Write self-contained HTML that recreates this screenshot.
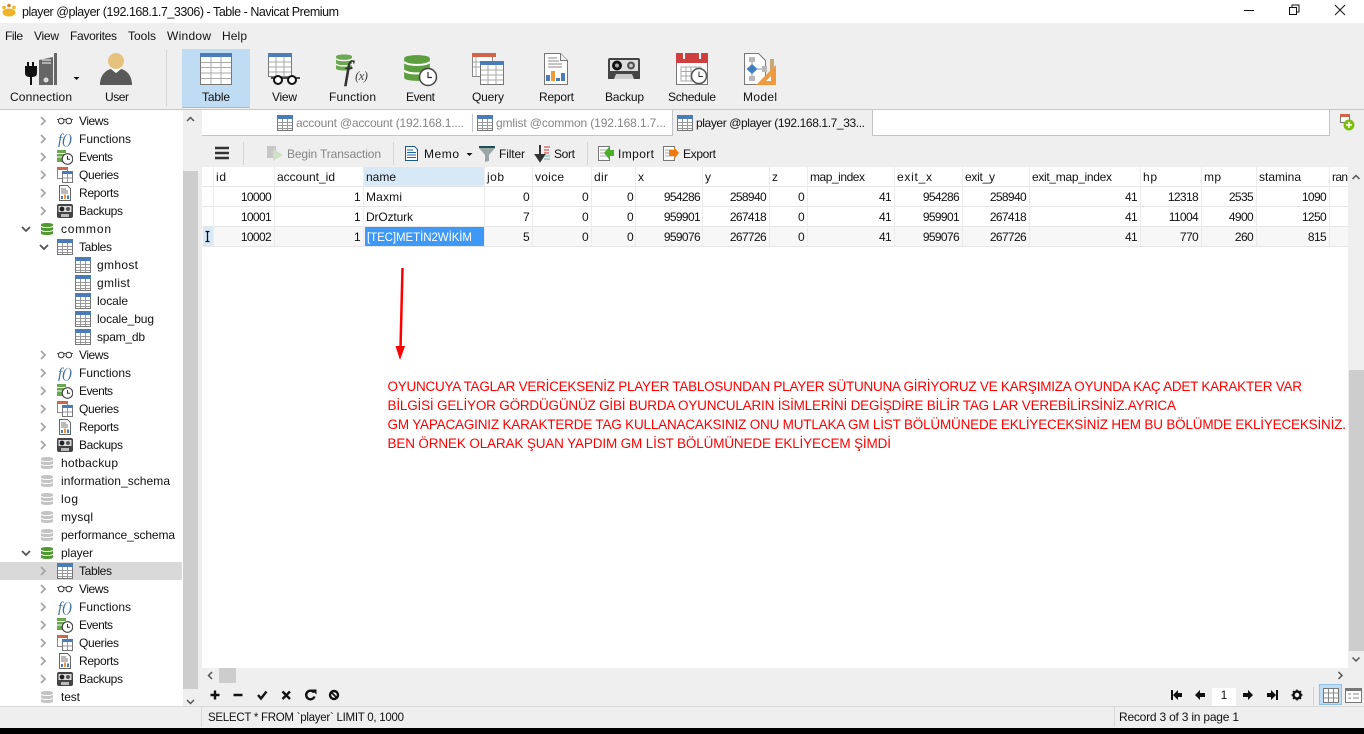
<!DOCTYPE html>
<html><head><meta charset="utf-8"><title>player @player (192.168.1.7_3306) - Table - Navicat Premium</title>
<style>
html,body{margin:0;padding:0;background:#000;width:1364px;height:734px;overflow:hidden}
svg{display:block}
text{font-family:"Liberation Sans","DejaVu Sans",sans-serif;font-size:12px;fill:#111}
.g{fill:#858585}
.r{text-anchor:end;letter-spacing:-.65px}
.m{text-anchor:middle}
.red{fill:#f00;font-size:13.5px}
.fn{font-family:"Liberation Serif",serif;font-style:italic;font-size:15px;fill:#3f6f9f}
</style></head><body>
<svg width="1364" height="734" viewBox="0 0 1364 734" xmlns="http://www.w3.org/2000/svg">
<defs>
<symbol id="tbl" viewBox="0 0 16 16"><rect x=".5" y=".5" width="15" height="15" fill="#fff" stroke="#777"/><rect width="16" height="4" fill="#4a7db8"/><path d="M5.5 4v11M10.5 4v11M1 7.5h14M1 10.5h14M1 13.5h14" stroke="#999" fill="none"/></symbol>
<symbol id="gl" viewBox="0 0 16 8"><path d="M0 2.500h16" stroke="#333" stroke-width=".8"/><circle cx="4.200" cy="4" r="2.800" fill="#fff" stroke="#333" stroke-width="1"/><circle cx="11.800" cy="4" r="2.800" fill="#fff" stroke="#333" stroke-width="1"/></symbol>
<symbol id="ev" viewBox="0 0 16 16"><path d="M0 1h9v12H0z" fill="#6aa84f"/><path d="M0 4.5h9M0 8h9" stroke="#fff"/><circle cx="10.5" cy="10" r="5.3" fill="#fff" stroke="#444" stroke-width="1.2"/><path d="M10.5 7v3.3h2.6" stroke="#333" fill="none"/></symbol>
<symbol id="qu" viewBox="0 0 16 16"><rect x=".5" y=".5" width="10" height="11" fill="#fff" stroke="#888"/><rect width="11" height="3" fill="#d0654a"/><rect x="5.5" y="4.5" width="10" height="11" fill="#fff" stroke="#777"/><rect x="5" y="4" width="11" height="3" fill="#4a7db8"/><path d="M10.5 7v8M6 11h9" stroke="#999"/></symbol>
<symbol id="rp" viewBox="0 0 16 16"><path d="M2.5.5h8l3 3v12h-11z" fill="#fff" stroke="#666"/><path d="M4 4h5M4 6h7M4 8h7" stroke="#777"/><rect x="4" y="11" width="2" height="3" fill="#4a7db8"/><rect x="7" y="9.500" width="2" height="4.500" fill="#ef9a3c"/><rect x="10" y="10.500" width="2" height="3.500" fill="#4a7db8"/></symbol>
<symbol id="bk" viewBox="0 0 16 16"><rect y="1" width="16" height="14" rx="2" fill="#444"/><rect x="1.500" y="3" width="13" height="6" fill="#ddd"/><circle cx="5" cy="6" r="2.400" fill="#222"/><circle cx="11" cy="6" r="2" fill="#555"/><rect x="4" y="11" width="8" height="3" fill="#bbb"/></symbol>
<symbol id="db" viewBox="0 0 12 14"><path d="M0 2.500C0 .5 12 .5 12 2.500V11.500C12 13.500 0 13.500 0 11.500Z" fill="currentColor"/><path d="M0 4.200C2 6 10 6 12 4.200M0 8.200C2 10 10 10 12 8.200" stroke="#fff" fill="none"/></symbol>
</defs>

<!-- base -->
<rect width="1364" height="728" fill="#efefef"/>
<rect y="728" width="1364" height="6" fill="#000"/>

<!-- title bar -->
<rect width="1364" height="23" fill="#fff"/>
<g fill="#f0b429"><ellipse cx="9" cy="12.500" rx="6.500" ry="4"/><circle cx="4" cy="7.500" r="1.800"/><circle cx="9" cy="5.500" r="1.800" fill="#d9822b"/><circle cx="14" cy="7.500" r="1.800"/></g>
<text x="22" y="16" style="font-size:12.5px" textLength="317">player @player (192.168.1.7_3306) - Table - Navicat Premium</text>
<path d="M1244 10.500h10" stroke="#111"/>
<path d="M1289.500 7.500h7v7h-7zM1292 7.500v-2.500h7v7h-2.500" fill="none" stroke="#111"/>
<path d="M1335 5l10 10M1345 5l-10 10" stroke="#111"/>

<!-- menu -->
<text x="5" y="40" textLength="18">File</text>
<text x="34" y="40" textLength="25">View</text>
<text x="70" y="40" textLength="47">Favorites</text>
<text x="128" y="40" textLength="28">Tools</text>
<text x="167" y="40" textLength="44">Window</text>
<text x="222" y="40" textLength="25">Help</text>

<!-- main toolbar -->
<rect x="182" y="49" width="68" height="59" fill="#bfdcf2"/><rect x="182" y="107" width="68" height="1" fill="#8ec3ee"/>
<path d="M166.500 50v56" stroke="#d4d4d4"/>
<path d="M39 60l14-3v28H39z" fill="#666"/><path d="M54 53h3v32h-3z" fill="#666"/><path d="M42 60h9M42 63h9" stroke="#fff"/><circle cx="46" cy="80" r="2.500" fill="#ddd"/>
<path d="M25 66h2v-4h2v4h3v-4h2v4h3v7q0 4-5 4v8h-2v-8q-5 0-5-4z" fill="#111"/>
<path d="M73.500 77h6l-3 3z" fill="#111"/>
<text x="10" y="101" textLength="62">Connection</text>
<circle cx="116" cy="61" r="8" fill="#e6c27f"/><path d="M100 85c0-10 6-15 11-16l5 4 5-4c5 1 11 6 11 16z" fill="#595959"/><path d="M111 69l5 4 5-4z" fill="#fff"/>
<text x="105" y="101" textLength="24">User</text>

<rect x="200.500" y="53.500" width="31" height="31" fill="#fff" stroke="#777"/><rect x="200" y="53" width="32" height="4" fill="#4a7db8"/>
<path d="M211 57v27M221 57v27M201 62.500h30M201 67.500h30M201 73h30M201 78.500h30" stroke="#aaa"/>
<text x="202" y="101" textLength="28">Table</text>

<rect x="268.500" y="53.500" width="23" height="23" fill="#fff" stroke="#777"/><rect x="268" y="53" width="24" height="4" fill="#4a7db8"/>
<path d="M276 57v20M284 57v20M269 62h22M269 67h22M269 72h22" stroke="#aaa"/>
<path d="M271 78h29" stroke="#111" stroke-width="1.500"/><circle cx="278" cy="80" r="4" fill="#fff" stroke="#111" stroke-width="2"/><circle cx="292" cy="80" r="4" fill="#fff" stroke="#111" stroke-width="2"/>
<text x="272" y="101" textLength="25">View</text>

<use href="#db" x="336" y="53" width="16" height="19" style="color:#6aa84f"/>
<text x="344" y="80" style="font-family:'Liberation Serif',serif;font-style:italic;font-size:27px;fill:#333;stroke:#333;stroke-width:.4">f</text>
<text x="355" y="80" style="font-family:'Liberation Serif',serif;font-style:italic;font-size:13px;fill:#444" textLength="13">(x)</text>
<text x="329" y="101" textLength="47">Function</text>

<use href="#db" x="404" y="53" width="26" height="30" style="color:#5d9e3f"/>
<circle cx="428" cy="77" r="8.500" fill="#fff" stroke="#444" stroke-width="1.500"/><path d="M428 72v5.500h4" stroke="#333" fill="none" stroke-width="1.200"/>
<text x="406" y="101" textLength="29">Event</text>

<rect x="472.500" y="53.500" width="20" height="23" fill="#fff" stroke="#888"/><rect x="472" y="53" width="24" height="4" fill="#d0654a"/>
<rect x="480.500" y="61.500" width="23" height="23" fill="#fff" stroke="#777"/><rect x="480" y="61" width="24" height="4" fill="#4a7db8"/>
<path d="M488 65v19M496 65v19M481 70h22M481 75h22M481 80h22M473 62h7M473 67h7M476 57v19" stroke="#aaa"/>
<text x="472" y="101" textLength="32">Query</text>

<path d="M544.500 53.500h16l7 7v24h-23z" fill="#fff" stroke="#777"/><path d="M560.500 53.500v7h7" fill="#eee" stroke="#777"/>
<path d="M548 58h9M548 61h11M548 64h14M548 67h14" stroke="#888"/><rect x="546" y="75" width="4" height="6" fill="#4a7db8"/><rect x="551" y="71" width="4" height="10" fill="#ef9a3c"/><rect x="556" y="78" width="4" height="3" fill="#4a7db8"/><rect x="561" y="73" width="4" height="8" fill="#4a7db8"/>
<text x="539" y="101" textLength="35">Report</text>

<path d="M610 58h28a2 2 0 0 1 2 2v19h-32V60a2 2 0 0 1 2-2z" fill="#444"/><rect x="610" y="60" width="28" height="11" fill="#ddd"/>
<circle cx="617" cy="65.500" r="5" fill="#111"/><circle cx="617" cy="65.500" r="2" fill="#aaa"/><circle cx="631" cy="65.500" r="4" fill="#555"/><circle cx="631" cy="65.500" r="1.800" fill="#ccc"/><path d="M614 79l2-5h16l2 5z" fill="#ccc"/>
<text x="605" y="101" textLength="39">Backup</text>

<rect x="676.500" y="53.500" width="31" height="31" fill="#fff" stroke="#777"/><rect x="676" y="53" width="32" height="10" fill="#cf3f3f"/><path d="M684 53v6M700 53v6" stroke="#fff" stroke-width="2"/>
<path d="M681 67h20v14h-20zM686 67v14M691 67v14M696 67v14M681 71.500h20M681 76h20" stroke="#aaa" fill="none"/>
<circle cx="699" cy="76" r="7.500" fill="#fff" stroke="#555" stroke-width="1.500"/><path d="M699 71.500v5h4" stroke="#333" fill="none"/>
<text x="668" y="101" textLength="48">Schedule</text>

<path d="M744.500 53.500h14l7 7v24h-21z" fill="#fff" stroke="#777"/>
<rect x="749" y="57" width="6" height="5" fill="#b8b8b8"/><rect x="749" y="76" width="6" height="5" fill="#b8b8b8"/><path d="M752 62v14M756 69h6" stroke="#999"/><path d="M752 64l5.500 5-5.500 5-5.500-5z" fill="#3f7fbf"/><rect x="762" y="66" width="5" height="6" fill="#b8b8b8"/>
<rect x="770" y="59" width="4" height="15" fill="#c9a878"/><path d="M776 65v20h-20z" fill="#ef9a3c"/><path d="M771 76v5h-5z" fill="#fff"/>
<text x="743" y="101" textLength="34">Model</text>

<path d="M0 109.500h1364" stroke="#c8c8c8"/>

<!-- sidebar -->
<rect x="0" y="110" width="183" height="596" fill="#fff"/>
<rect x="0" y="562" width="182" height="18" fill="#d9d9d9"/>
<rect x="183" y="110" width="15" height="596" fill="#efefef"/>
<rect x="183" y="171" width="15" height="518" fill="#cdcdcd"/>
<path d="M187 121l3.500-3.500 3.500 3.500M187 700l3.500 3.500 3.500-3.500" fill="none" stroke="#555" stroke-width="1.500"/>

<g fill="none" stroke="#a6a6a6" stroke-width="1.800">
<path d="M41 117l4 4-4 4M41 135l4 4-4 4M41 153l4 4-4 4M41 171l4 4-4 4M41 189l4 4-4 4M41 207l4 4-4 4"/>
<path d="M41 351l4 4-4 4M41 369l4 4-4 4M41 387l4 4-4 4M41 405l4 4-4 4M41 423l4 4-4 4M41 441l4 4-4 4"/>
<path d="M41 567l4 4-4 4M41 585l4 4-4 4M41 603l4 4-4 4M41 621l4 4-4 4M41 639l4 4-4 4M41 657l4 4-4 4M41 675l4 4-4 4"/>
</g>
<g fill="none" stroke="#555" stroke-width="1.800"><path d="M22 227l4 4 4-4M40 245l4 4 4-4M22 551l4 4 4-4"/></g>

<!-- sidebar icons -->
<use href="#gl" x="57" y="117" width="16" height="8"/><use href="#gl" x="57" y="351" width="16" height="8"/><use href="#gl" x="57" y="585" width="16" height="8"/>
<text class="fn" x="58" y="144" textLength="14">f()</text><text class="fn" x="58" y="378" textLength="14">f()</text><text class="fn" x="58" y="612" textLength="14">f()</text>
<use href="#ev" x="57" y="149" width="16" height="16"/><use href="#ev" x="57" y="383" width="16" height="16"/><use href="#ev" x="57" y="617" width="16" height="16"/>
<use href="#qu" x="57" y="167" width="16" height="16"/><use href="#qu" x="57" y="401" width="16" height="16"/><use href="#qu" x="57" y="635" width="16" height="16"/>
<use href="#rp" x="57" y="185" width="16" height="16"/><use href="#rp" x="57" y="419" width="16" height="16"/><use href="#rp" x="57" y="653" width="16" height="16"/>
<use href="#bk" x="57" y="203" width="16" height="16"/><use href="#bk" x="57" y="437" width="16" height="16"/><use href="#bk" x="57" y="671" width="16" height="16"/>
<use href="#db" x="41" y="222" width="12" height="14" style="color:#4f9a2f"/><use href="#db" x="41" y="546" width="12" height="14" style="color:#4f9a2f"/>
<g style="color:#c4c4c4"><use href="#db" x="41" y="456" width="12" height="14"/><use href="#db" x="41" y="474" width="12" height="14"/><use href="#db" x="41" y="492" width="12" height="14"/><use href="#db" x="41" y="510" width="12" height="14"/><use href="#db" x="41" y="528" width="12" height="14"/><use href="#db" x="41" y="690" width="12" height="14"/></g>
<use href="#tbl" x="57" y="239" width="16" height="16"/><use href="#tbl" x="57" y="563" width="16" height="16"/>
<use href="#tbl" x="75" y="257" width="16" height="16"/><use href="#tbl" x="75" y="275" width="16" height="16"/><use href="#tbl" x="75" y="293" width="16" height="16"/><use href="#tbl" x="75" y="311" width="16" height="16"/><use href="#tbl" x="75" y="329" width="16" height="16"/>

<!-- sidebar text -->
<text x="79" y="125" textLength="30">Views</text><text x="79" y="143" textLength="52">Functions</text><text x="79" y="161" textLength="34">Events</text><text x="79" y="179" textLength="40">Queries</text><text x="79" y="197" textLength="40">Reports</text><text x="79" y="215" textLength="44">Backups</text>
<text x="61" y="233" textLength="50">common</text><text x="79" y="251" textLength="33">Tables</text>
<text x="97" y="269" textLength="41">gmhost</text><text x="97" y="287" textLength="33">gmlist</text><text x="97" y="305" textLength="31">locale</text><text x="97" y="323" textLength="57">locale_bug</text><text x="97" y="341" textLength="48">spam_db</text>
<text x="79" y="359" textLength="30">Views</text><text x="79" y="377" textLength="52">Functions</text><text x="79" y="395" textLength="34">Events</text><text x="79" y="413" textLength="40">Queries</text><text x="79" y="431" textLength="40">Reports</text><text x="79" y="449" textLength="44">Backups</text>
<text x="61" y="467" textLength="57">hotbackup</text><text x="61" y="485" textLength="109">information_schema</text><text x="61" y="503" textLength="17">log</text><text x="61" y="521" textLength="32">mysql</text><text x="61" y="539" textLength="114">performance_schema</text><text x="61" y="557" textLength="32">player</text>
<text x="79" y="575" textLength="33">Tables</text><text x="79" y="593" textLength="30">Views</text><text x="79" y="611" textLength="52">Functions</text><text x="79" y="629" textLength="34">Events</text><text x="79" y="647" textLength="40">Queries</text><text x="79" y="665" textLength="40">Reports</text><text x="79" y="683" textLength="44">Backups</text>
<text x="61" y="701" textLength="19">test</text>

<!-- tabs -->
<rect x="202" y="110" width="1128" height="25" fill="#fff"/>
<path d="M202 135.500h470M873 135.500h457M672.500 110v26M872.500 110v26M1329.500 110v26" stroke="#c4c4c4"/>
<rect x="673" y="110" width="199" height="26" fill="#efefef"/>
<path d="M472.500 114v18" stroke="#c4c4c4"/>
<use href="#tbl" x="277" y="115" width="16" height="16"/><use href="#tbl" x="477" y="115" width="16" height="16"/><use href="#tbl" x="677" y="115" width="16" height="16"/>
<text class="g" x="296" y="127" textLength="168">account @account (192.168.1....</text>
<text class="g" x="496" y="127" textLength="170">gmlist @common (192.168.1.7...</text>
<text x="696" y="127" textLength="169">player @player (192.168.1.7_33...</text>
<rect x="1340.500" y="114.500" width="9" height="8" fill="#fff" stroke="#777"/><rect x="1340" y="114" width="10" height="3" fill="#d0654a"/>
<circle cx="1349" cy="125" r="5.500" fill="#7ebc12"/><path d="M1346 125h6M1349 122v6" stroke="#fff" stroke-width="1.400"/>

<!-- toolbar 2 -->
<path d="M215 148h14M215 153h14M215 158h14" stroke="#333" stroke-width="2.600"/>
<path d="M243.500 142v23M393.500 142v23M587.500 142v23" stroke="#d4d4d4"/>
<path d="M267 146h9v12h-9z" fill="#c8c8c8"/><path d="M273 149l10 6-10 6z" fill="#cfe0c4"/>
<text class="g" x="287" y="158" textLength="94">Begin Transaction</text>
<path d="M405.500 146.500h9l3 3v11h-12z" fill="#fff" stroke="#1a5a8a"/><path d="M407 150h6M407 152.500h9M407 155h9M407 157.500h9" stroke="#1a6a9a"/>
<text x="424" y="158" textLength="35">Memo</text>
<path d="M466.500 153h6l-3 3z" fill="#111"/>
<path d="M479 148h16l-6 7v6l-4 1v-7z" fill="#9aa5a5"/><path d="M479 147h16" stroke="#1d4d5a" stroke-width="2"/>
<text x="499" y="158" textLength="26">Filter</text>
<path d="M540 145v11M536 155h8l-4 6z" stroke="#333" fill="#333" stroke-width="2"/><path d="M544 147h6" stroke="#c33"/><path d="M544 150h5M544 153h5" stroke="#c33"/><path d="M544 156h6M544 159h6" stroke="#7aa"/>
<text x="554" y="158" textLength="21">Sort</text>
<rect x="598.500" y="146.500" width="11" height="14" fill="#fff" stroke="#777"/><path d="M600 150h8M600 153h8M600 156h8" stroke="#aaa"/><path d="M614 150v6h-5v3l-5-6 5-6v3z" fill="#4caf2b"/>
<text x="618" y="158" textLength="36">Import</text>
<rect x="663.500" y="146.500" width="11" height="14" fill="#fff" stroke="#777"/><path d="M665 150h8M665 153h8M665 156h8" stroke="#aaa"/><path d="M669 150h5v-3l5 6-5 6v-3h-5z" fill="#f07a10"/>
<text x="683" y="158" textLength="33">Export</text>

<!-- grid -->
<rect x="202" y="167" width="1146" height="501" fill="#fff"/>
<rect x="364" y="167" width="120" height="19" fill="#d7e8f7"/>
<rect x="202" y="227" width="1146" height="19" fill="#f7f7f7"/>
<rect x="203" y="227" width="10" height="19" fill="#d8e9f7"/>
<rect x="365" y="227" width="119" height="19" fill="#3d99f5"/>
<path d="M202 186.500h1146M202 206.500h1146M202 226.500h1146M202 246.500h1146" stroke="#e6e6e6"/>
<path d="M213.500 167v79M274.500 167v79M363.500 167v79M484.500 167v79M532.500 167v79M591.500 167v79M635.500 167v79M702.500 167v79M769.500 167v79M807.500 167v79M894.500 167v79M962.500 167v79M1029.500 167v79M1140.500 167v79M1201.500 167v79M1256.500 167v79M1329.500 167v79" stroke="#ececec"/>
<path d="M205.500 231.500h4M205.500 241.500h4M207.500 232v9" stroke="#111" stroke-width="1.300" fill="none"/>

<text x="216" y="181" textLength="10">id</text><text x="277" y="181" textLength="58">account_id</text><text x="366" y="181" textLength="30">name</text><text x="487" y="181" textLength="17">job</text><text x="535" y="181" textLength="29">voice</text><text x="594" y="181" textLength="14">dir</text><text x="638" y="181">x</text><text x="705" y="181">y</text><text x="772" y="181">z</text><text x="810" y="181" textLength="55">map_index</text><text x="897" y="181" textLength="35">exit_x</text><text x="965" y="181" textLength="30">exit_y</text><text x="1032" y="181" textLength="80">exit_map_index</text><text x="1143" y="181" textLength="14">hp</text><text x="1204" y="181" textLength="17">mp</text><text x="1259" y="181" textLength="42">stamina</text><text x="1332" y="181" textLength="16">ran</text>

<g>
<text class="r" x="271" y="201">10000</text><text class="r" x="360" y="201">1</text><text x="366" y="201" textLength="36">Maxmi</text><text class="r" x="529" y="201">0</text><text class="r" x="588" y="201">0</text><text class="r" x="633" y="201">0</text><text class="r" x="700" y="201">954286</text><text class="r" x="766" y="201">258940</text><text class="r" x="804" y="201">0</text><text class="r" x="891" y="201">41</text><text class="r" x="959" y="201">954286</text><text class="r" x="1026" y="201">258940</text><text class="r" x="1137" y="201">41</text><text class="r" x="1198" y="201">12318</text><text class="r" x="1253" y="201">2535</text><text class="r" x="1326" y="201">1090</text>
<text class="r" x="271" y="221">10001</text><text class="r" x="360" y="221">1</text><text x="366" y="221" textLength="47">DrOzturk</text><text class="r" x="529" y="221">7</text><text class="r" x="588" y="221">0</text><text class="r" x="633" y="221">0</text><text class="r" x="700" y="221">959901</text><text class="r" x="766" y="221">267418</text><text class="r" x="804" y="221">0</text><text class="r" x="891" y="221">41</text><text class="r" x="959" y="221">959901</text><text class="r" x="1026" y="221">267418</text><text class="r" x="1137" y="221">41</text><text class="r" x="1198" y="221">11004</text><text class="r" x="1253" y="221">4900</text><text class="r" x="1326" y="221">1250</text>
<text class="r" x="271" y="241">10002</text><text class="r" x="360" y="241">1</text><text x="367" y="241" textLength="105" style="fill:#fff;font-size:11.5px">[TEC]METİN2WİKİM</text><text class="r" x="529" y="241">5</text><text class="r" x="588" y="241">0</text><text class="r" x="633" y="241">0</text><text class="r" x="700" y="241">959076</text><text class="r" x="766" y="241">267726</text><text class="r" x="804" y="241">0</text><text class="r" x="891" y="241">41</text><text class="r" x="959" y="241">959076</text><text class="r" x="1026" y="241">267726</text><text class="r" x="1137" y="241">41</text><text class="r" x="1198" y="241">770</text><text class="r" x="1253" y="241">260</text><text class="r" x="1326" y="241">815</text>
</g>

<!-- annotation -->
<path d="M402.500 268L400.500 348" stroke="#f00" stroke-width="2.500"/><path d="M395.500 346h9.500L400 360z" fill="#f00"/>
<text class="red" x="387.500" y="391" textLength="914.500">OYUNCUYA TAGLAR VERİCEKSENİZ PLAYER TABLOSUNDAN PLAYER SÜTUNUNA GİRİYORUZ VE KARŞIMIZA OYUNDA KAÇ ADET KARAKTER VAR</text>
<text class="red" x="387.500" y="410" textLength="788.500">BİLGİSİ GELİYOR GÖRDÜGÜNÜZ GİBİ BURDA OYUNCULARIN İSİMLERİNİ DEGİŞDİRE BİLİR TAG LAR VEREBİLİRSİNİZ.AYRICA</text>
<text class="red" x="387.500" y="429" textLength="958.500">GM YAPACAGINIZ KARAKTERDE TAG KULLANACAKSINIZ ONU MUTLAKA GM LİST BÖLÜMÜNEDE EKLİYECEKSİNİZ HEM BU BÖLÜMDE EKLİYECEKSİNİZ.</text>
<text class="red" x="387.500" y="448" textLength="503.500">BEN ÖRNEK OLARAK ŞUAN YAPDIM GM LİST BÖLÜMÜNEDE EKLİYECEM ŞİMDİ</text>

<!-- grid scrollbars -->
<rect x="1349" y="370" width="15" height="281" fill="#cdcdcd"/>
<path d="M1352.500 179l3.500-3.500 3.500 3.500M1352.500 657.500l3.500 3.500 3.500-3.500" fill="none" stroke="#555" stroke-width="1.500"/>
<rect x="219" y="668" width="17" height="15" fill="#cdcdcd"/>
<path d="M212 672l-3.500 3.500 3.500 3.500M1338.500 672l3.500 3.500-3.500 3.500" fill="none" stroke="#555" stroke-width="1.500"/>

<!-- bottom toolbar -->
<g stroke="#111" stroke-width="2.400" fill="none">
<path d="M210.500 695h9M215 690.500v9M233.500 695h9"/>
<path d="M258 695l3 3.500 5.500-7"/>
<path d="M282.500 691.500l7.500 7.500M290 691.500l-7.500 7.500"/>
<path d="M314 692.500a4.300 4.300 0 1 0 .5 4"/>
<circle cx="334" cy="695" r="4"/><path d="M331.500 692.500l5 5" stroke-width="1.600"/>
</g>
<path d="M311 689.500h5.500v5z" fill="#111"/>

<g fill="#111">
<path d="M1171 690h2v10h-2zM1173 695l5-5v3h4v4h-4v3z"/>
<path d="M1195 695l5-5v3h5v4h-5v3z"/>
<path d="M1253 695l-5-5v3h-5v4h5v3z"/>
<path d="M1276 690h2v10h-2zM1276 695l-5-5v3h-4v4h4v3z"/>
</g>
<rect x="1212" y="688" width="24" height="18" fill="#fff"/>
<text class="m" x="1224" y="699">1</text>
<circle cx="1297" cy="695" r="3.500" fill="none" stroke="#111" stroke-width="2.500"/>
<path d="M1297 689.500v2M1297 698.500v2M1291.500 695h2M1300.500 695h2M1293 691l1.500 1.500M1299.500 697.500l1.500 1.500M1301 691l-1.500 1.500M1294.500 697.500l-1.500 1.500" stroke="#111" stroke-width="1.500"/>
<path d="M1313.500 687v18" stroke="#d0d0d0"/>
<rect x="1319.500" y="684.500" width="22" height="20" fill="#bfdcf2" stroke="#8ec3ee"/>
<rect x="1323.500" y="688.500" width="15" height="14" fill="#fff" stroke="#777"/><path d="M1328.500 689v13M1333.500 689v13M1324 693h14M1324 698h14" stroke="#888"/>
<rect x="1345.500" y="688.500" width="16" height="14" fill="#fff" stroke="#777"/><rect x="1345" y="688" width="17" height="3" fill="#777"/><path d="M1348 694h3M1348 698h3M1353 694h6M1353 698h6" stroke="#888"/>

<!-- status bar -->
<path d="M0 706.500h1364" stroke="#d8d8d8"/>
<path d="M201.500 707v20M1114.500 707v20" stroke="#d8d8d8"/>
<text x="208" y="721" style="font-size:11.5px" textLength="196">SELECT * FROM `player` LIMIT 0, 1000</text>
<text x="1119" y="721" textLength="120">Record 3 of 3 in page 1</text>
</svg>
</body></html>
